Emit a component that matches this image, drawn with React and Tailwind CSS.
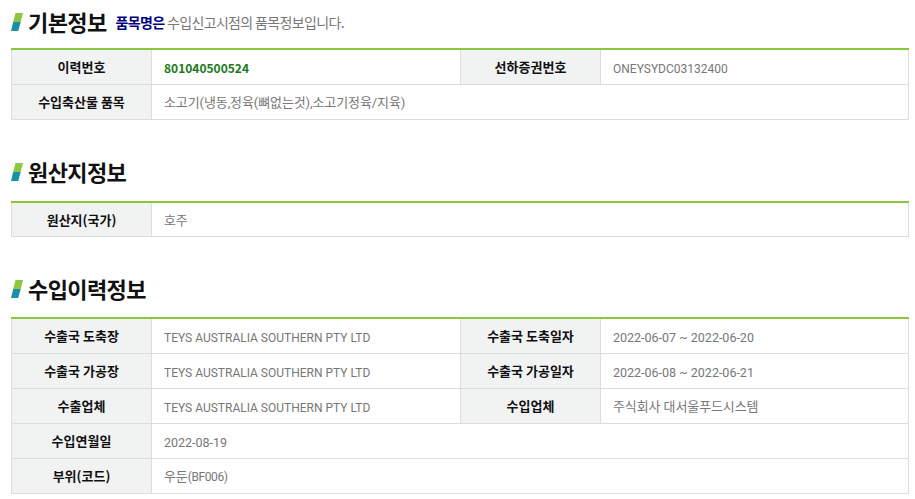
const FONT = "font-['Noto_Sans_CJK_KR','Noto_Sans',sans-serif]";
const ROBOTO = "font-['Roboto','Noto_Sans_CJK_KR',sans-serif] text-[#777]";
const CAPS = `${ROBOTO} text-[12px] pt-[5px]`;
const DATE = `${ROBOTO} text-[12.5px] pt-[5px]`;
const MIXED = `${ROBOTO} text-[13px] tracking-[-0.1px] pt-[3px]`;

function Mark() {
  return (
    <svg width="12" height="18" viewBox="0 0 12 18" className="shrink-0">
      <polygon points="4.5,0 12,0 9.7,9 2.2,9" fill="#8dc63f" />
      <polygon points="2.2,9 9.7,9 7.2,18 0,18" fill="#1a8fa8" />
    </svg>
  );
}

function Heading({ children, note }) {
  return (
    <div className="flex items-center h-[30px] pl-[11px]">
      <Mark />
      <h2 className="ml-[5px] text-[22px] leading-[30px] font-bold text-[#111] tracking-[-0.6px] -translate-y-[1px]">{children}</h2>
      {note}
    </div>
  );
}

function Th({ children }) {
  return (
    <th className="h-[35px] p-0 border border-[#dddddd] bg-[#f1f3f3] text-center text-[13px] font-bold text-[#111]">
      {children}
    </th>
  );
}

function Td({ children, colSpan, className = MIXED }) {
  return (
    <td colSpan={colSpan} className={`h-[35px] pb-0 pl-3 pr-2 border border-[#dddddd] ${className}`}>
      {children}
    </td>
  );
}

function InfoTable({ children }) {
  return (
    <div className="ml-[11px] w-[898px] border-t-2 border-[#8cc63f]">
      <table className="w-full table-fixed border-collapse [&_tr:first-child>*]:border-t-0 [&_tr:first-child>*]:h-[34px]">
        <colgroup>
          <col className="w-[140px]" />
          <col className="w-[309px]" />
          <col className="w-[140px]" />
          <col />
        </colgroup>
        <tbody>{children}</tbody>
      </table>
    </div>
  );
}

export default function App() {
  return (
    <div className={`w-[915px] h-[499px] overflow-hidden bg-white ${FONT}`}>
      <div className="pt-[7px]">
        <Heading
          note={
            <p className="ml-[9px] mt-[1px] text-[14px] tracking-[-0.65px] text-[#777]">
              <b className="text-[#000080] font-bold">품목명은</b> 수입신고시점의 품목정보입니다.
            </p>
          }
        >
          기본정보
        </Heading>
        <div className="mt-[11px]">
          <InfoTable>
            <tr>
              <Th>이력번호</Th>
              <Td className="text-[12px] font-bold text-[#1a7a1a] pt-[2px]">801040500524</Td>
              <Th>선하증권번호</Th>
              <Td className={CAPS}>ONEYSYDC03132400</Td>
            </tr>
            <tr>
              <Th>수입축산물 품목</Th>
              <Td colSpan={3}>소고기(냉동,정육(뼈없는것),소고기정육/지육)</Td>
            </tr>
          </InfoTable>
        </div>
      </div>

      <div className="mt-[37px]">
        <Heading>원산지정보</Heading>
        <div className="mt-[14px]">
          <InfoTable>
            <tr>
              <Th>원산지(국가)</Th>
              <Td colSpan={3}>호주</Td>
            </tr>
          </InfoTable>
        </div>
      </div>

      <div className="mt-[37px]">
        <Heading>수입이력정보</Heading>
        <div className="mt-[13px]">
          <InfoTable>
            <tr>
              <Th>수출국 도축장</Th>
              <Td className={CAPS}>TEYS AUSTRALIA SOUTHERN PTY LTD</Td>
              <Th>수출국 도축일자</Th>
              <Td className={DATE}>2022-06-07 ~ 2022-06-20</Td>
            </tr>
            <tr>
              <Th>수출국 가공장</Th>
              <Td className={CAPS}>TEYS AUSTRALIA SOUTHERN PTY LTD</Td>
              <Th>수출국 가공일자</Th>
              <Td className={DATE}>2022-06-08 ~ 2022-06-21</Td>
            </tr>
            <tr>
              <Th>수출업체</Th>
              <Td className={CAPS}>TEYS AUSTRALIA SOUTHERN PTY LTD</Td>
              <Th>수입업체</Th>
              <Td>주식회사 대서울푸드시스템</Td>
            </tr>
            <tr>
              <Th>수입연월일</Th>
              <Td colSpan={3} className={DATE}>2022-08-19</Td>
            </tr>
            <tr>
              <Th>부위(코드)</Th>
              <Td colSpan={3}>
                우둔<span className="text-[12px] tracking-[-0.4px]">(BF006)</span>
              </Td>
            </tr>
          </InfoTable>
        </div>
      </div>
    </div>
  );
}
